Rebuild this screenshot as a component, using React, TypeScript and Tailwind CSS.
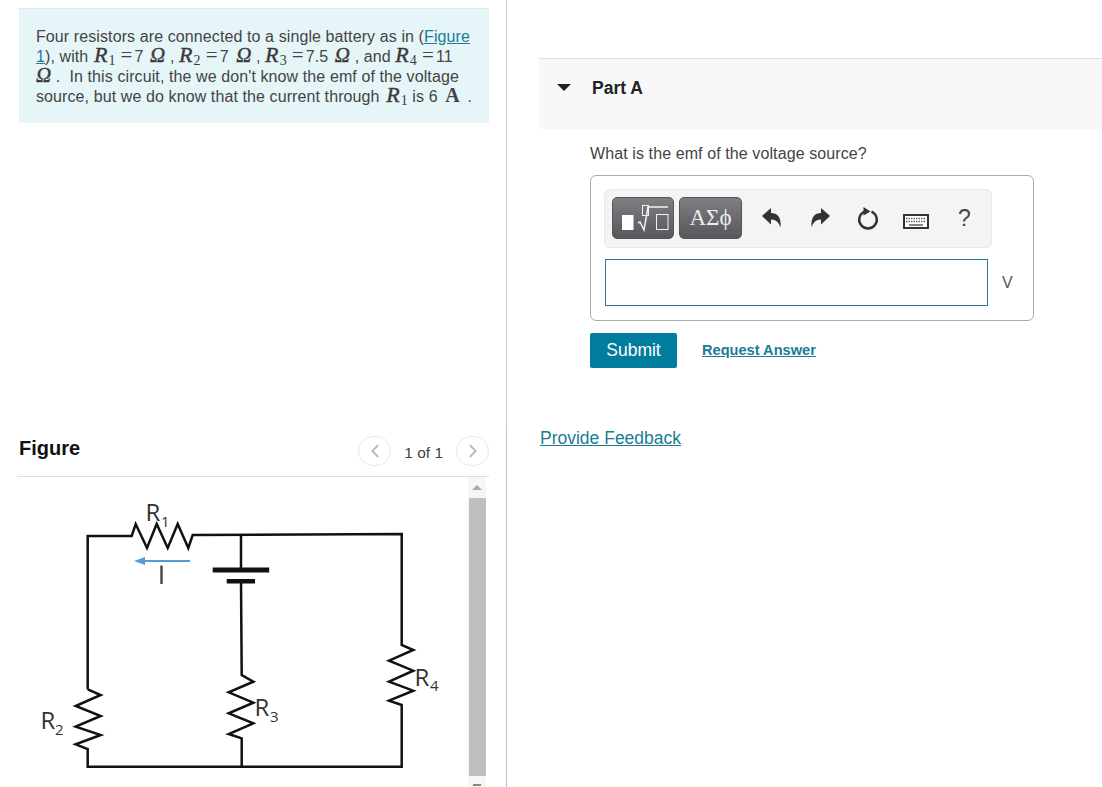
import React from 'react';
import { ChevronLeft, ChevronRight } from 'lucide-react';

const M: React.FC<{ sym: string; sub?: string }> = ({ sym, sub }) => (
  <span className="font-['Liberation_Serif',serif] text-[#3a3a3a] leading-[0]">
    <span className="italic text-[22px] leading-[0] [-webkit-text-stroke:0.4px_#3a3a3a]">{sym}</span>
    {sub && <span className="text-[14px] leading-[0] relative top-[3px] ml-[1px]">{sub}</span>}
  </span>
);

const Om = () => (
  <span className="font-['Liberation_Serif',serif] italic text-[21px] leading-[0] text-[#3a3a3a] [-webkit-text-stroke:0.4px_#3a3a3a]">Ω</span>
);

const Eq = () => (
  <span className="font-['Liberation_Serif',serif] text-[21px] leading-[0] ml-[5px] mr-[2px]">=</span>
);

const Line: React.FC<{ children: React.ReactNode }> = ({ children }) => (
  <div className="h-[20px] leading-[20px] whitespace-nowrap">{children}</div>
);

const Undo: React.FC<{ className?: string }> = ({ className }) => (
  <svg width="20" height="20" viewBox="0 0 20 20" className={className}>
    <path d="M0 8L9 0V5C15 5 19.5 9 18.5 19.5C17 14.5 14 11.5 9 11.5V16.5Z" fill="#333" />
  </svg>
);

const Circuit = () => (
  <svg viewBox="18 477 448 310" className="w-[448px] h-[310px] shrink-0" fill="none">
    <g stroke="#111" strokeWidth="2.5" strokeLinejoin="miter">
      <path d="M87.7 689.3V536H131.7L135.7 524L147 548L156.7 524L167.7 548L177.7 524L188.3 548L192.7 535L401.7 534V645L413.3 650L389 660.7L413.3 670.7L389 681.7L413.3 690.7L389 700.7L401.7 705V766.7H87.7V749L75.7 744.3L100.7 735L75.7 726.7L100.7 716L75.7 706L100.7 695L87.7 689.3" />
      <path d="M241 535V568M241 581L241.7 675L253.3 681.7L228.7 692.3L253.3 702.7L228.7 713.3L253.3 723.3L228.7 734L241.7 738.3V767" />
    </g>
    <rect x="212.7" y="567.5" width="56.5" height="5" fill="#111" />
    <rect x="226.7" y="579" width="28.3" height="4.5" fill="#111" />
    <path d="M142 561H190" stroke="#5b9bd5" strokeWidth="2" />
    <path d="M134 561L145 557V565Z" fill="#5b9bd5" />
    <path d="M161.5 565.5V584" stroke="#444" strokeWidth="2.4" />
    <g fontFamily="'Open Sans', sans-serif" fill="#333">
      <text x="145.5" y="521" fontSize="24">R</text>
      <text x="161" y="527" fontSize="15">1</text>
      <text x="40.5" y="729" fontSize="24">R</text>
      <text x="55" y="735" fontSize="15">2</text>
      <text x="254.5" y="716" fontSize="24">R</text>
      <text x="270" y="722" fontSize="15">3</text>
      <text x="414.5" y="686" fontSize="24">R</text>
      <text x="430" y="691" fontSize="15">4</text>
    </g>
  </svg>
);

export default function App() {
  return (
    <div className="w-[1102px] h-[787px] overflow-hidden flex bg-white font-['Liberation_Sans',Arial,sans-serif] text-[16px] tracking-[0.1px] text-[#444]">
      <div className="w-[507px] shrink-0 flex flex-col">
        <div className="h-[428px] border-r border-[#ccc] pt-2 pl-[19px] pr-[17px]">
          <div className="w-[470px] h-[115px] bg-[#e6f5f8] border-t border-[#e2e6e6] pl-[17px] pt-[18px]">
            <Line>
              Four resistors are connected to a single battery as in (<a className="underline text-[#1a7c96]">Figure</a>
            </Line>
            <Line>
              <a className="underline text-[#1a7c96]">1</a>), with <span className="ml-[1px] leading-[0]"><M sym="R" sub="1" /></span><Eq />7 <span className="ml-[2px] leading-[0]"><Om /></span> , <M sym="R" sub="2" /><Eq />7 <span className="ml-[3px] leading-[0]"><Om /></span> , <M sym="R" sub="3" /><Eq />7.5 <span className="ml-[2px] leading-[0]"><Om /></span> , and <M sym="R" sub="4" /><Eq />11
            </Line>
            <Line>
              <Om /> .&nbsp; In this circuit, the we don't know the emf of the voltage
            </Line>
            <Line>
              source, but we do know that the current through <span className="ml-[2px] leading-[0]"><M sym="R" sub="1" /></span> is 6 <span className="ml-[3px] font-['Liberation_Serif',serif] font-bold text-[20px] leading-[0]">A</span> &thinsp;.
            </Line>
          </div>
        </div>
        <div className="flex-1 border-r border-[#a9cbd6] pl-[17px] pr-[17px] min-h-0">
          <div className="w-[472px] h-[49px] border-b border-[#ddd] flex items-center pb-[3px]">
            <h2 className="ml-[2px] font-bold text-[20px] tracking-normal text-[#111] mt-[-6px]">Figure</h2>
            <div className="ml-auto flex items-center">
              <span className="w-[33px] h-[30px] rounded-full border border-[#e8e8e8] flex items-center justify-center">
                <ChevronLeft size={22} strokeWidth={2} className="text-[#bbb]" />
              </span>
              <span className="mx-[13px] text-[15.5px] tracking-normal text-[#444] mt-[5px]">1 of 1</span>
              <span className="w-[33px] h-[30px] rounded-full border border-[#e8e8e8] flex items-center justify-center">
                <ChevronRight size={22} strokeWidth={2} className="text-[#bbb]" />
              </span>
            </div>
          </div>
          <div className="flex h-[310px]">
            <div className="ml-[1px]">
              <Circuit />
            </div>
            <div className="ml-[2px] w-[18px] h-[310px] bg-[#f6f6f6] flex flex-col items-center">
              <div className="h-[21px] flex items-center justify-center">
                <div className="w-0 h-0 border-x-[5px] border-x-transparent border-b-[5px] border-b-[#aaa]" />
              </div>
              <div className="w-[17px] h-[278px] bg-[#bfbfbf]" />
              <div className="mt-[8px] w-[8px] h-[2px] bg-[#888]" />
            </div>
          </div>
        </div>
      </div>

      <div className="flex-1 min-w-0 pt-[58px]">
        <div className="ml-[32px] h-[71px] bg-[#f8f8f8] border-t border-[#ddd] flex items-start pt-[18px] pl-[18px]">
          <div className="mt-[7px] w-0 h-0 border-x-[7px] border-x-transparent border-t-[7px] border-t-[#222]" />
          <span className="ml-[21px] font-bold text-[17.5px] leading-[22px] tracking-normal text-[#222]">Part A</span>
        </div>
        <div className="pl-[83px]">
          <p className="mt-[16px] leading-[18px]">What is the emf of the voltage source?</p>
          <div className="mt-[12px] w-[444px] h-[146px] border border-[#aaa] rounded-[6px] pl-[13px] pt-[13px]">
            <div className="w-[388px] h-[59px] bg-[#f4f4f4] border border-[#e8e8e8] rounded-[6px] flex items-start pt-[7px] pl-[7px]">
              <div className="w-[62px] h-[42px] rounded-[5px] border border-[#555] bg-gradient-to-b from-[#7f7f83] to-[#58585c] flex items-center justify-center">
                <svg width="60" height="40" viewBox="0 0 60 40" fill="none">
                  <rect x="9" y="17" width="11.5" height="15" fill="#fff" />
                  <rect x="29.5" y="7.5" width="6" height="10" stroke="#f2f2f2" />
                  <path d="M25 25L27 24L31 32L35 9H55" stroke="#f2f2f2" strokeWidth="1.5" />
                  <rect x="43.5" y="16.5" width="11.5" height="15" stroke="#f2f2f2" />
                </svg>
              </div>
              <div className="ml-[5px] w-[63px] h-[42px] rounded-[5px] border border-[#555] bg-gradient-to-b from-[#7f7f83] to-[#58585c] flex items-center justify-center font-['Liberation_Serif',serif] text-[23px] tracking-normal text-[#eee]">
                ΑΣϕ
              </div>
              <Undo className="ml-[20px] mt-[11px]" />
              <Undo className="ml-[28px] mt-[11px] -scale-x-100" />
              <svg width="22" height="24" viewBox="0 0 22 24" fill="none" className="ml-[27px] mt-[9px]">
                <path d="M7.5 5.6A8.8 8.8 0 1 0 14.5 5.6" stroke="#333" strokeWidth="2.4" />
                <path d="M6.5 1L13.5 5.5L6.5 9.5Z" fill="#333" />
              </svg>
              <svg width="26" height="15" viewBox="0 0 26 15" fill="none" className="ml-[24px] mt-[17px]">
                <rect x="1" y="1" width="24" height="13" fill="#fff" stroke="#333" strokeWidth="2" />
                <path d="M3 4.5H23M3 7.5H23" stroke="#666" strokeWidth="1.6" strokeDasharray="1.5 1" />
                <path d="M6 11H20" stroke="#666" strokeWidth="1.6" />
              </svg>
              <span className="ml-[29px] mt-[7px] text-[23px] leading-[28px] text-[#444]">?</span>
            </div>
            <div className="mt-[11px] flex items-center">
              <div className="w-[383px] h-[47px] ml-[1px] border border-[#2f7a92] bg-white" />
              <span className="ml-[14px] text-[#555]">V</span>
            </div>
          </div>
          <div className="mt-[12px] flex items-center">
            <button className="w-[87px] h-[35px] rounded-[2px] bg-[#007c9e] text-white text-[17.5px] tracking-normal">Submit</button>
            <a className="ml-[25px] font-bold text-[14.6px] tracking-normal text-[#1a7c96] underline">Request Answer</a>
          </div>
        </div>
        <a className="block ml-[33px] mt-[59px] text-[17.5px] tracking-normal leading-[22px] text-[#1a7c96] underline">Provide Feedback</a>
      </div>
    </div>
  );
}
